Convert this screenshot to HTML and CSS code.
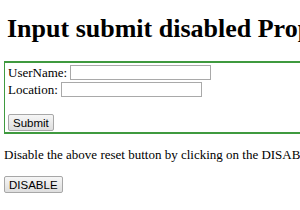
FILE: index.html
```html
<!DOCTYPE html>
<html lang="en">
<head>
  <meta charset="UTF-8">
  <title>Input submit disabled Property</title>
  <link rel="stylesheet" href="styles.css">
</head>
<body>

  <h1>Input submit disabled Property</h1>

  <!-- Form with the submit button -->
  <form class="demo-form" id="demo-form">
    <div class="field">UserName: <input type="text" class="text-input" name="user"></div>
    <div class="field">Location: <input type="text" class="text-input" name="loc"></div>
    <div class="spacer"></div>
    <input type="submit" class="btn" id="submit-btn" value="Submit">
  </form>

  <p class="hint">Disable the above reset button by clicking on the DISABLE button.</p>

  <button class="btn" id="disable-btn" type="button">DISABLE</button>

  <script>
    document.getElementById('disable-btn').addEventListener('click', () => {
      document.getElementById('submit-btn').disabled = true;
    });
  </script>

</body>
</html>
```

FILE: styles.css
```css
body {
  font-family: "Liberation Serif", serif;
  font-size: 13px;
  color: #000;
  background: #fff;
  margin: 0 0 0 4px;
  padding-top: 14px;
  width: 420px;
}

h1 {
  font-size: 26px;
  margin: 0 0 18px 3px;
  line-height: 29px;
}

.demo-form {
  border: 2px solid #3f9a3f;
  margin-left: -1px;
  padding: 1px 3px 0 3px;
  width: 360px;
}

.field {
  height: 17px;
  display: flex;
  align-items: center;
}

.text-input {
  width: 137px;
  height: 13px;
  border: 1px solid #a9a9a9;
  padding: 0 1px;
  margin: 0 0 0 3px;
}

.spacer {
  height: 16px;
}

.btn {
  font-family: "Liberation Sans", Arial, sans-serif;
  font-size: 11.5px;
  color: #000;
  background: linear-gradient(#f6f6f6, #dedede);
  border: 1px solid #a7a7a7;
  border-radius: 2px;
  height: 17px;
  padding: 0 4px;
  margin: 0 0 1px 0;
}

.hint {
  margin: 13px 0 13px 0;
  white-space: nowrap;
}
```
